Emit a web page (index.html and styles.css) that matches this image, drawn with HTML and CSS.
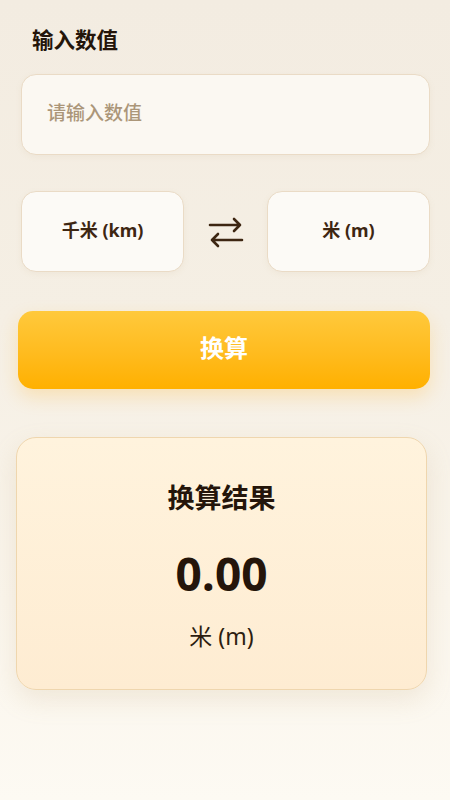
FILE: index.html
```html
<!DOCTYPE html>
<html lang="zh">
<head>
<meta charset="utf-8">
<link rel="stylesheet" href="styles.css">
</head>
<body>
<main class="page">
  <h2 class="label">输入数值</h2>
  <div class="input-box"><span class="placeholder">请输入数值</span></div>
  <div class="units">
    <div class="unit">千米 (km)</div>
    <div class="swap">
      <svg width="40" height="32" viewBox="0 0 40 32" fill="none" stroke="#3d2612" stroke-width="2.6" stroke-linecap="round" stroke-linejoin="round">
        <path d="M4 9 H34 M28 3 L34 9 L28 15"/>
        <path d="M36 24 H6 M12 18 L6 24 L12 30"/>
      </svg>
    </div>
    <div class="unit">米 (m)</div>
  </div>
  <button class="convert">换算</button>
  <section class="result">
    <h3 class="result-title">换算结果</h3>
    <div class="result-value">0.00</div>
    <div class="result-unit">米 (m)</div>
  </section>
</main>
</body>
</html>
```
FILE: styles.css
```css
* { box-sizing: border-box; }
html, body { margin: 0; padding: 0; }
body {
  width: 450px;
  height: 800px;
  overflow: hidden;
  font-family: "Noto Sans", "Noto Sans CJK SC", sans-serif;
  background: linear-gradient(180deg, #f3ece1 0%, #f5efe4 40%, #faf5ec 75%, #fdfaf3 100%);
  color: #2a1a0e;
}
.page {
  padding: 25px 20px 0 21px;
  display: flex;
  flex-direction: column;
}
.label {
  margin: 0 0 19px 11px;
  font-size: 21.5px;
  font-weight: 700;
  line-height: 30px;
  color: #24150a;
}
.input-box {
  height: 81px;
  background: #fbf8f2;
  border: 1px solid #eadbc6;
  border-radius: 15px;
  display: flex;
  align-items: center;
  padding-left: 25px;
  padding-bottom: 5px;
  box-shadow: 0 2px 6px rgba(180, 150, 100, 0.08);
}
.placeholder {
  font-size: 19px;
  color: #ab9679;
  font-weight: 500;
}
.units {
  margin-top: 36px;
  display: flex;
  align-items: center;
}
.unit {
  width: 163px;
  height: 81px;
  background: #fcfaf6;
  border: 1px solid #eadbc6;
  border-radius: 15px;
  display: flex;
  align-items: center;
  justify-content: center;
  padding-bottom: 5px;
  font-size: 18px;
  font-weight: 700;
  color: #3e2612;
  box-shadow: 0 2px 6px rgba(180, 150, 100, 0.08);
}
.swap {
  flex: 1;
  display: flex;
  justify-content: center;
  align-items: center;
}
.convert {
  margin-top: 39px;
  margin-left: -3px;
  width: 412px;
  height: 78px;
  border: none;
  border-radius: 15px;
  padding: 0 0 7px;
  background: linear-gradient(180deg, #ffc93c 0%, #ffbb1e 55%, #ffb000 100%);
  color: #ffffff;
  font-family: "Noto Sans", "Noto Sans CJK SC", sans-serif;
  font-size: 24px;
  font-weight: 700;
  box-shadow: 0 8px 18px rgba(255, 180, 40, 0.25);
}
.result {
  margin-top: 48px;
  margin-left: -5px;
  width: 411px;
  height: 253px;
  border-radius: 20px;
  border: 1px solid #efd6ae;
  background: linear-gradient(180deg, #fff3dd 0%, #feecd2 100%);
  box-shadow: 0 10px 26px rgba(190, 160, 110, 0.18);
  display: flex;
  flex-direction: column;
  align-items: center;
}
.result-title {
  margin: 42px 0 0;
  font-size: 27px;
  font-weight: 700;
  line-height: 36px;
  color: #24150a;
}
.result-value {
  margin-top: 29px;
  font-family: "Open Sans", "Noto Sans", sans-serif;
  font-size: 46px;
  font-weight: 700;
  line-height: 56px;
  color: #24150a;
}
.result-unit {
  margin-top: 20px;
  font-size: 23px;
  line-height: 30px;
  color: #2d1d10;
}
```
